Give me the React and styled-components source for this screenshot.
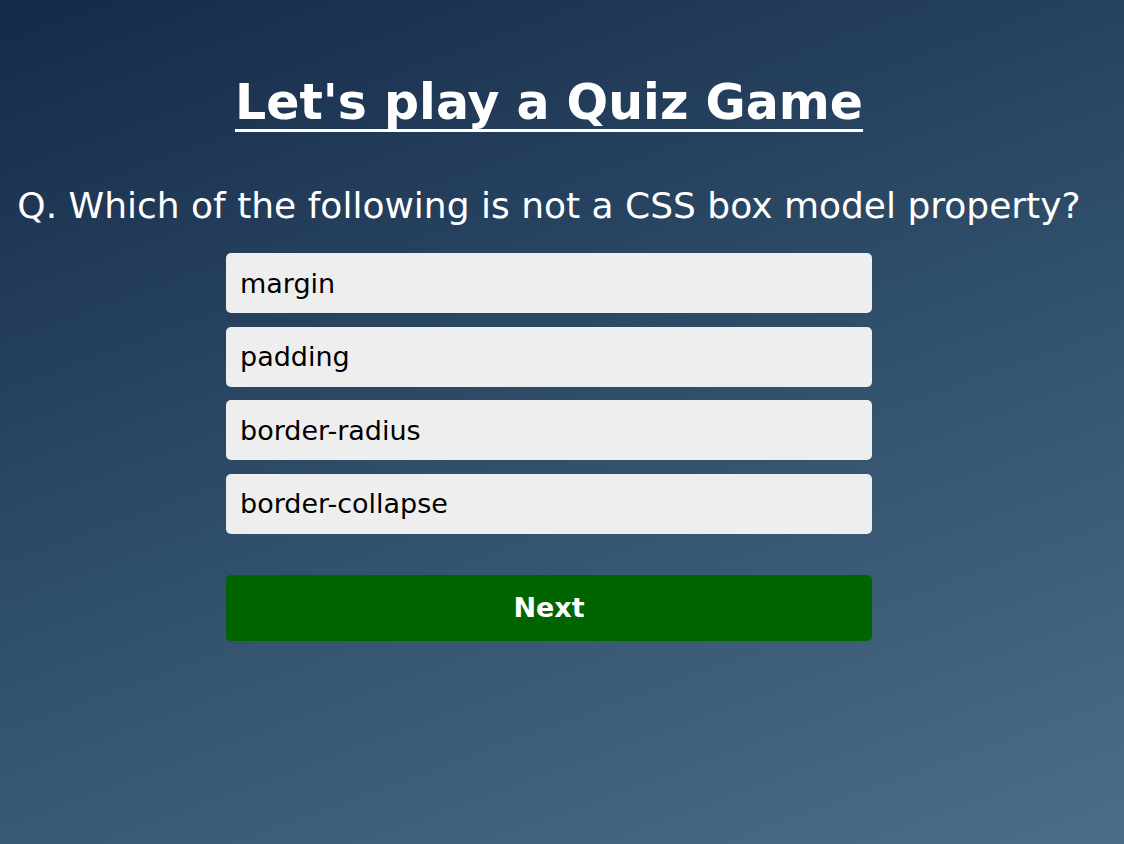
import React from "react";
import styled, { createGlobalStyle } from "styled-components";

const Global = createGlobalStyle`
  html, body { margin: 0; padding: 0; }
  body {
    min-height: 844px;
    background: linear-gradient(160deg, #152a49 0%, #2f4e6a 50%, #4b6e88 100%);
    font-family: "DejaVu Sans", Verdana, sans-serif;
  }
`;

const Page = styled.main`
  width: 1098px;
  min-height: 844px;
  display: flex;
  flex-direction: column;
  align-items: center;
  padding-top: 1px;
  box-sizing: border-box;
`;

const Title = styled.h1`
  margin: 72px 0 0;
  color: #fff;
  font-size: 49px;
  font-weight: bold;
  text-decoration: underline;
  text-decoration-skip-ink: none;
  text-underline-offset: 10px;
  text-decoration-thickness: 3px;
  line-height: 60px;
`;

const Question = styled.h2`
  margin: 51px 0 0;
  color: #fff;
  font-size: 36px;
  font-weight: normal;
  line-height: 44px;
  white-space: nowrap;
`;

const Options = styled.div`
  margin-top: 25px;
  width: 646px;
  display: flex;
  flex-direction: column;
  gap: 13.5px;
`;

const Option = styled.button`
  display: flex;
  align-items: center;
  height: 60px;
  padding: 0 14px;
  border: none;
  border-radius: 5px;
  background: #eeeeee;
  color: #000;
  font-family: inherit;
  font-size: 27px;
  text-align: left;
`;

const NextButton = styled.button`
  margin-top: 41px;
  width: 646px;
  height: 66px;
  border: none;
  border-radius: 5px;
  background: #006400;
  color: #fff;
  font-family: inherit;
  font-size: 27px;
  font-weight: bold;
`;

const options = ["margin", "padding", "border-radius", "border-collapse"];

export default function App() {
  return (
    <>
      <Global />
      <Page>
        <Title>Let's play a Quiz Game</Title>
        <Question>Q. Which of the following is not a CSS box model property?</Question>
        <Options>
          {options.map((o) => (
            <Option key={o}>{o}</Option>
          ))}
        </Options>
        <NextButton>Next</NextButton>
      </Page>
    </>
  );
}
